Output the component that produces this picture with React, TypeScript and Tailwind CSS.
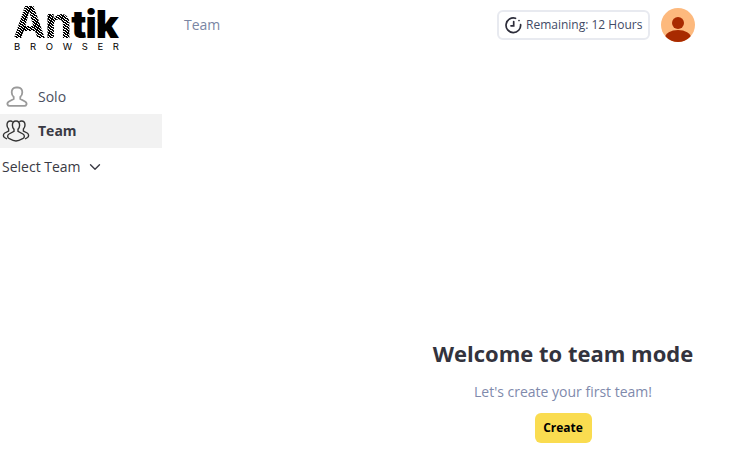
import { ChevronDown } from "lucide-react";

function Logo() {
  return (
    <div className="w-[106px] ml-[13px] mt-[3px] flex flex-col items-start">
      <div className="h-[38px] flex items-baseline leading-[38px] font-['Inter',sans-serif] whitespace-nowrap">
        <span className="inline-block text-[44px] font-bold tracking-[-1px] bg-[repeating-linear-gradient(35deg,#000_0px,#000_1.500px,#fff_1.500px,#fff_2.200px)] bg-clip-text text-transparent">
          An
        </span>
        <span className="inline-block text-[38px] font-black tracking-[-1px] text-black">tik</span>
      </div>
      <div className="mt-[1px] pl-[1px] w-full flex justify-between text-[9.500px] leading-[10px] font-['Inter',sans-serif] text-black">
        {"BROWSER".split("").map((c, i) => (
          <span key={i}>{c}</span>
        ))}
      </div>
    </div>
  );
}

function SoloIcon() {
  return (
    <svg width="24" height="24" viewBox="0 0 24 24" fill="none" stroke="#9a9a9a" strokeWidth="1.800">
      <path d="M12 2.500c-2.800 0-4.300 2-4.300 4.700 0 2 .9 3.700 2 4.700v2.100l-4.700 2.500c-1.500.8-1.800 2.100-1.400 3.100.3.800 1 1.300 2 1.300h14.800c1 0 1.700-.5 2-1.300.4-1-.1-2.300-1.400-3.100l-4.700-2.500v-2.100c1.100-1 2-2.700 2-4.700 0-2.700-1.500-4.700-4.300-4.700z" />
    </svg>
  );
}

function TeamIcon() {
  return (
    <svg width="28" height="24" viewBox="0 0 28 24" fill="none" stroke="#333" strokeWidth="1.400">
      <path d="M14 2c-2.200 0-3.600 1.800-3.600 4.200 0 1.800.8 3.200 1.600 4.100v2l-5 2.700c-1.800 1-1.800 3.500 0 4.500 1.800 1 4.300 2.500 7 2.500s5.200-1.500 7-2.500c1.800-1 1.800-3.500 0-4.500l-5-2.700v-2c.8-.9 1.600-2.300 1.600-4.100C17.600 3.800 16.200 2 14 2z" />
      <path d="M10.600 2.700C10 2.200 9.300 2 8.500 2 6.300 2 5 3.800 5 6c0 1.800.8 3.200 1.600 4v2l-3.800 2c-1.800 1-1.800 3.500-.3 4.500L5 20" />
      <path d="M17.400 2.700c.6-.5 1.300-.7 2.100-.7 2.200 0 3.500 1.800 3.500 4 0 1.800-.8 3.200-1.600 4v2l3.800 2c1.800 1 1.800 3.500.3 4.500L23 20" />
    </svg>
  );
}

function ClockIcon() {
  return (
    <svg width="18" height="18" viewBox="0 0 18 18" fill="none" stroke="#2d2d3a" strokeWidth="1.700" strokeLinecap="round">
      <path d="M10.500 2.300A7.300 7.300 0 1 0 15.600 8.500" />
      <path d="M8.700 5.500v4.300H6" />
      <path d="M14 4.500h.01" />
    </svg>
  );
}

function Avatar() {
  return (
    <div className="w-[34px] h-[34px] rounded-full overflow-hidden bg-[#fdb97d]">
      <svg width="34" height="34" viewBox="0 0 34 34">
        <circle cx="17" cy="15" r="6" fill="#a82a00" />
        <ellipse cx="17" cy="30" rx="13" ry="8" fill="#a82a00" />
      </svg>
    </div>
  );
}

export default function App() {
  return (
    <div className="w-[736px] h-[460px] overflow-hidden bg-white font-['Open_Sans',sans-serif] flex flex-col">
      <header className="h-[50px] flex items-start">
        <div className="w-[162px] shrink-0">
          <Logo />
        </div>
        <div className="ml-[22px] mt-[15px] text-sm leading-[20px] text-[#7a86a3]">Team</div>
        <div className="ml-auto mt-[10px] h-[30px] w-[153px] flex items-center gap-[3px] pl-[6px] rounded-md border-2 border-[#e8eaf0] text-xs text-[#3f4a66]">
          <ClockIcon />
          <span>Remaining: 12 Hours</span>
        </div>
        <div className="ml-[11px] mr-[41px] mt-[8px]">
          <Avatar />
        </div>
      </header>
      <div className="flex-1 flex">
        <aside className="w-[162px] shrink-0 pt-[30px] flex flex-col">
          <div className="h-[34px] flex items-center pl-[4px] gap-[10px] text-sm text-[#4a4f5e]">
            <SoloIcon />
            <span>Solo</span>
          </div>
          <div className="h-[34px] flex items-center pl-[2px] gap-[8px] bg-[#f2f2f2] text-sm font-bold text-[#3a3a44]">
            <TeamIcon />
            <span>Team</span>
          </div>
          <div className="h-[38px] flex items-center pl-[2px] gap-[5px] text-sm text-[#3a3a44]">
            <span>Select Team</span>
            <ChevronDown size={18} strokeWidth={1.800} />
          </div>
        </aside>
        <main className="flex-1 flex flex-col items-center pl-[228px] pt-[288px]">
          <h1 className="text-[22px] leading-[30px] font-bold text-[#33333d] whitespace-nowrap">Welcome to team mode</h1>
          <p className="mt-[14px] text-sm leading-[20px] text-[#7f8aac] whitespace-nowrap">Let's create your first team!</p>
          <button className="mt-[11px] w-[57px] h-[30px] rounded-md bg-[#fadc50] text-xs font-bold text-black">Create</button>
        </main>
      </div>
    </div>
  );
}
